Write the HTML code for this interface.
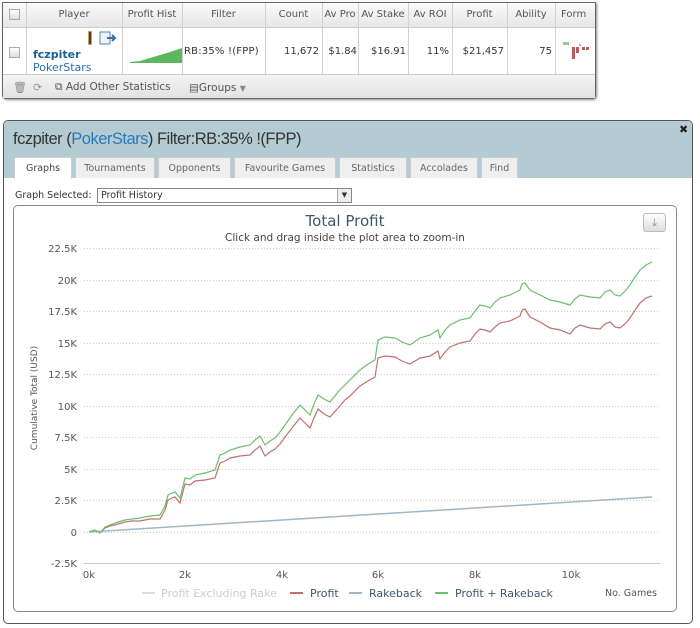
<!DOCTYPE html>
<html><head><meta charset="utf-8"><style>
*{margin:0;padding:0;box-sizing:border-box}
body{width:700px;height:628px;background:#fff;font-family:"DejaVu Sans","Liberation Sans",sans-serif;position:relative;overflow:hidden;color:#333}
.a{position:absolute}
.tb{left:2px;top:2px;width:594px;height:97px;border:1px solid #666;border-radius:0 0 4px 4px;box-shadow:1px 1px 2px #888;background:#fff}
.hd{top:0;height:25px;left:0;width:592px;background:linear-gradient(#fafafa,#e6e6e6);border-bottom:1px solid #ccc}
.ft{top:71px;height:24px;left:0;width:592px;background:linear-gradient(#f4f4f4,#e2e2e2);border-top:1px solid #ccc}
.c{font-size:10px;color:#555;text-align:center;white-space:nowrap;overflow:hidden}
.vl{width:1px;background:#d0d0d0;top:0;height:71px}
.cb{width:11px;height:11px;border:1px solid #aaa;background:linear-gradient(#fff,#ddd)}
.d{font-size:10px;color:#333;white-space:nowrap;text-align:right}
.tab{top:157px;height:21px;background:#eee;border:1px solid #ccc;border-bottom:none;font-size:9.5px;color:#666;text-align:center;line-height:21px;border-radius:2px 2px 0 0}
</style></head><body>
<div class="a tb">
 <div class="a hd"></div>
 <div class="a ft"></div>
 <div class="a vl" style="left:23px"></div><div class="a vl" style="left:119px"></div><div class="a vl" style="left:179px"></div><div class="a vl" style="left:262px"></div><div class="a vl" style="left:319px"></div><div class="a vl" style="left:355px"></div><div class="a vl" style="left:405px"></div><div class="a vl" style="left:449px"></div><div class="a vl" style="left:504px"></div><div class="a vl" style="left:552px"></div>
 <div class="a cb" style="left:6px;top:6px"></div>
 <div class="a cb" style="left:6px;top:44px"></div>
 <div class="a c" style="left:23px;width:96px;top:6px">Player</div>
 <div class="a c" style="left:119px;width:60px;top:6px">Profit Hist</div>
 <div class="a c" style="left:179px;width:83px;top:6px">Filter</div>
 <div class="a c" style="left:262px;width:57px;top:6px">Count</div>
 <div class="a c" style="left:319px;width:36px;top:6px">Av Pro</div>
 <div class="a c" style="left:355px;width:50px;top:6px">Av Stake</div>
 <div class="a c" style="left:405px;width:44px;top:6px">Av ROI</div>
 <div class="a c" style="left:449px;width:55px;top:6px">Profit</div>
 <div class="a c" style="left:504px;width:48px;top:6px">Ability</div>
 <div class="a c" style="left:552px;width:40px;top:6px;text-align:left;padding-left:6px">Form</div>
 <div class="a" style="left:85px;top:28px;width:4px;height:14px;background:#5a3b1a;border:1px solid #c9a060"></div>
 <svg class="a" style="left:96px;top:28px" width="18" height="14"><rect x="1" y="1" width="10" height="12" fill="#eef4fa" stroke="#5a82b0"/><path d="M8 7h8M13 4l3 3-3 3" stroke="#3a6fb0" stroke-width="2" fill="none"/></svg>
 <div class="a" style="left:30px;top:45px;font-size:11px;font-weight:bold;color:#1a5f9a">fczpiter</div>
 <div class="a" style="left:30px;top:58px;font-size:11px;color:#2a70b0">PokerStars</div>
 <svg class="a" style="left:125px;top:40px" width="54" height="20"><path d="M2 20 L2 19 L12 18 L22 15 L32 12 L42 9 L54 5 L54 20Z" fill="#5cb85c"/></svg>
 <div class="a d" style="left:181px;top:43px;text-align:left;letter-spacing:0.2px">RB:35% !(FPP)</div>
 <div class="a d" style="left:262px;width:54px;top:43px">11,672</div>
 <div class="a d" style="left:319px;width:35px;top:43px;overflow:hidden">$1.84</div>
 <div class="a d" style="left:355px;width:48px;top:43px">$16.91</div>
 <div class="a d" style="left:405px;width:41px;top:43px">11%</div>
 <div class="a d" style="left:449px;width:52px;top:43px">$21,457</div>
 <div class="a d" style="left:504px;width:45px;top:43px">75</div>
 <div class="a" style="left:560px;top:39px;width:3px;height:3px;background:#8fd08f"></div>
 <div class="a" style="left:563px;top:39px;width:3px;height:3px;background:#8fd08f"></div>
 <div class="a" style="left:569px;top:44px;width:3px;height:12px;background:#b85c5c"></div>
 <div class="a" style="left:573px;top:44px;width:3px;height:6px;background:#b85c5c"></div>
 <div class="a" style="left:576px;top:41px;width:2px;height:2px;background:#8fd08f"></div>
 <div class="a" style="left:579px;top:44px;width:3px;height:3px;background:#b85c5c"></div>
 <div class="a" style="left:583px;top:44px;width:3px;height:3px;background:#b85c5c"></div>
 <div class="a" style="left:10px;top:78px;font-size:11px;color:#888">🗑</div>
 <div class="a" style="left:30px;top:78px;font-size:11px;color:#999">⟳</div>
 <div class="a" style="left:52px;top:78px;font-size:10.5px;color:#555">⧉ Add Other Statistics</div>
 <div class="a" style="left:186px;top:79px;font-size:10.5px;color:#555">▤Groups <span style="font-size:8px;color:#888">▼</span></div>
</div>

<div class="a" style="left:3px;top:120px;width:690px;height:504px;border:1px solid #555;border-radius:5px;background:#fff;overflow:hidden">
 <div class="a" style="left:0;top:0;width:688px;height:57px;background:#b4cbd3"></div>
 <div class="a" style="left:9px;top:9px;font-family:'Liberation Sans',sans-serif;font-size:16.5px;color:#333;letter-spacing:-0.5px">fczpiter (<span style="color:#2a78b8">PokerStars</span>) Filter:RB:35% !(FPP)</div>
 <div class="a" style="left:675px;top:2px;font-size:11px;font-weight:bold;color:#222">✖</div>
</div>
<div class="a tab" style="left:14px;width:58px;background:#fff;color:#444;height:22px">Graphs</div>
<div class="a tab" style="left:75px;width:80px">Tournaments</div>
<div class="a tab" style="left:158px;width:73px">Opponents</div>
<div class="a tab" style="left:234px;width:102px">Favourite Games</div>
<div class="a tab" style="left:339px;width:68px">Statistics</div>
<div class="a tab" style="left:410px;width:68px">Accolades</div>
<div class="a tab" style="left:481px;width:37px">Find</div>
<div class="a" style="left:15px;top:190px;font-size:9.5px;color:#333">Graph Selected:</div>
<div class="a" style="left:97px;top:188px;width:255px;height:15px;border:1px solid #888;background:#fff;font-size:9.5px;padding-left:3px;line-height:13px">Profit History</div>
<div class="a" style="left:337px;top:189px;width:14px;height:13px;background:#eee;border-left:1px solid #aaa;font-size:7px;text-align:center;line-height:13px">▼</div>
<div class="a" style="left:13px;top:205px;width:664px;height:407px;border:1px solid #888;border-radius:5px"></div>
<div class="a" style="left:643px;top:213px;width:23px;height:19px;border:1px solid #bbb;border-radius:3px;background:linear-gradient(#fff,#ddd);text-align:center;font-size:11px;color:#8a9a6a;line-height:18px">⤓</div>
<div class="a" style="left:0;width:690px;top:212px;text-align:center;font-size:15px;color:#3e576f">Total Profit</div>
<div class="a" style="left:0;width:690px;top:232px;text-align:center;font-size:10.5px;color:#444">Click and drag inside the plot area to zoom-in</div>
<div class="a" style="left:-30px;top:393px;width:130px;text-align:center;font-size:9px;color:#555;transform:rotate(-90deg)">Cumulative Total (USD)</div>
<svg class="a" style="left:0;top:0" width="700" height="628">
<g stroke="#ccc" stroke-dasharray="1,2" stroke-width="1">
<line x1="84" x2="660" y1="248.5" y2="248.5"/><line x1="84" x2="660" y1="280.5" y2="280.5"/><line x1="84" x2="660" y1="311.5" y2="311.5"/><line x1="84" x2="660" y1="343.5" y2="343.5"/><line x1="84" x2="660" y1="374.5" y2="374.5"/><line x1="84" x2="660" y1="406.5" y2="406.5"/><line x1="84" x2="660" y1="437.5" y2="437.5"/><line x1="84" x2="660" y1="469.5" y2="469.5"/><line x1="84" x2="660" y1="500.5" y2="500.5"/><line x1="84" x2="660" y1="532.5" y2="532.5"/>
</g>
<line x1="84" x2="660" y1="563.5" y2="563.5" stroke="#c0d0e0"/>
<g font-size="10" fill="#555" font-family="DejaVu Sans,sans-serif" text-anchor="end">
<text x="77" y="252">22.5K</text><text x="77" y="284">20K</text><text x="77" y="315">17.5K</text><text x="77" y="347">15K</text><text x="77" y="378">12.5K</text><text x="77" y="410">10K</text><text x="77" y="441">7.5K</text><text x="77" y="473">5K</text><text x="77" y="504">2.5K</text><text x="77" y="536">0</text><text x="77" y="567">-2.5K</text>
</g>
<g font-size="10" fill="#555" font-family="DejaVu Sans,sans-serif" text-anchor="middle">
<text x="89" y="578">0k</text><text x="185" y="578">2k</text><text x="282" y="578">4k</text><text x="378" y="578">6k</text><text x="475" y="578">8k</text><text x="571" y="578">10k</text>
</g>
<line x1="89" y1="532" x2="652" y2="497" stroke="#9fb7c8" stroke-width="1.5"/>
<polyline fill="none" stroke="#c07070" stroke-width="1.2" points="89,532 95,530 100,533 105,528 110,526 118,524 125,522 132,521 140,521 150,519 160,519 165,510 168,500 172,498 175,497 180,503 185,484 190,485 195,481 205,480 215,478 220,463 225,461 230,458 240,456 250,455 255,450 260,446 265,456 270,452 275,449 280,444 285,437 292,428 300,418 305,423 310,428 314,418 318,409 324,414 330,417 338,408 345,400 352,394 360,386 368,381 375,377 378,358 385,356 395,357 402,361 410,364 420,358 430,356 438,351 440,359 445,352 450,347 460,343 470,341 475,334 480,329 485,330 490,332 495,327 500,323 510,321 520,316 522,310 525,309 530,317 540,322 550,328 560,330 570,334 575,328 580,325 590,328 600,329 605,324 610,322 615,327 620,328 626,323 630,318 635,310 640,303 646,298 652,296"/>
<polyline fill="none" stroke="#6cbf6c" stroke-width="1.2" points="89,532 95,530 100,533 105,527 110,525 118,522 125,520 132,519 140,518 150,516 160,515 165,506 168,495 172,493 175,492 180,498 185,478 190,479 195,475 205,473 215,470 220,455 225,453 230,450 240,447 250,445 255,440 260,436 265,445 270,441 275,438 280,432 285,425 292,415 300,405 305,410 310,415 314,404 318,395 324,399 330,402 338,392 345,385 352,378 360,370 368,364 375,360 378,340 385,337 395,338 402,342 410,345 420,338 430,335 438,330 440,338 445,330 450,325 460,320 470,318 475,311 480,305 485,306 490,308 495,302 500,298 510,295 520,290 522,284 525,283 530,290 540,295 550,300 560,302 570,305 575,299 580,295 590,297 600,298 605,292 610,290 615,295 620,296 626,290 630,285 635,277 640,270 646,265 652,262"/>
<g font-family="DejaVu Sans,sans-serif" font-size="11">
<line x1="142" x2="155" y1="593" y2="593" stroke="#ddd" stroke-width="2"/><text x="161" y="597" fill="#ccc">Profit Excluding Rake</text>
<line x1="290" x2="303" y1="593" y2="593" stroke="#c07070" stroke-width="2"/><text x="310" y="597" fill="#3e576f">Profit</text>
<line x1="349" x2="362" y1="593" y2="593" stroke="#9fb7c8" stroke-width="2"/><text x="369" y="597" fill="#3e576f">Rakeback</text>
<line x1="435" x2="448" y1="593" y2="593" stroke="#6cbf6c" stroke-width="2"/><text x="455" y="597" fill="#3e576f">Profit + Rakeback</text>
<text x="657" y="596" font-size="9.5" fill="#555" text-anchor="end">No. Games</text>
</g>
</svg>
</body></html>
